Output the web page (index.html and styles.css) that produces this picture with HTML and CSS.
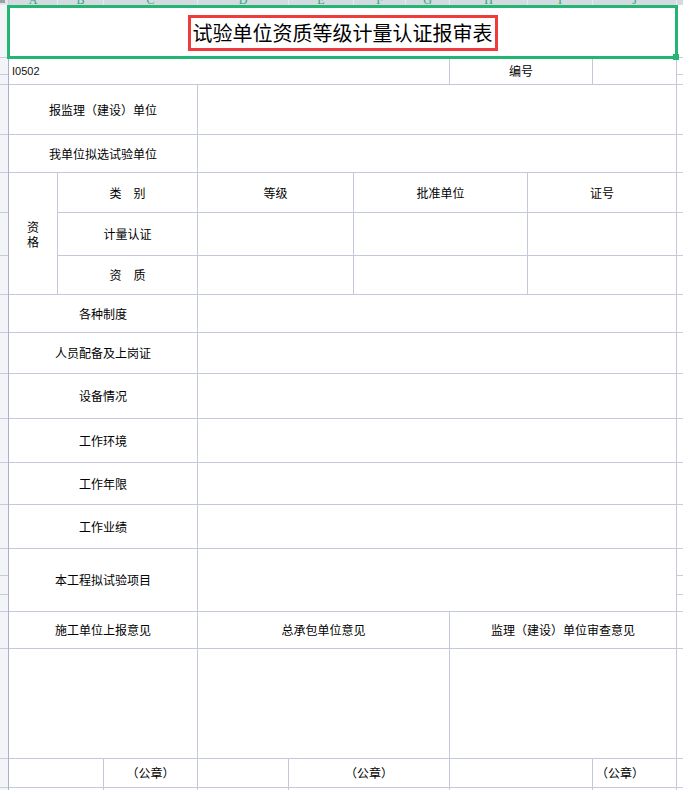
FILE: index.html
```html
<!DOCTYPE html>
<html lang="zh-CN">
<head>
<meta charset="utf-8">
<title>试验单位资质等级计量认证报审表</title>
<link rel="stylesheet" href="styles.css">
</head>
<body>
<div class="sheet">
  <div class="colhead">
    <div class="corner"><span class="corner-mark"></span></div>
    <div class="ch"><span>A</span></div>
    <div class="ch"><span>B</span></div>
    <div class="ch"><span>C</span></div>
    <div class="ch"><span>D</span></div>
    <div class="ch"><span>E</span></div>
    <div class="ch"><span>F</span></div>
    <div class="ch"><span>G</span></div>
    <div class="ch"><span>H</span></div>
    <div class="ch"><span>I</span></div>
    <div class="ch"><span>J</span></div>
    <div class="ch ch-k"></div>
  </div>
  <div class="body">
    <div class="rowhead">
      <div class="seg h53"></div><div class="seg h17"></div><div class="seg h10"></div>
      <div class="seg h50"></div><div class="seg h38"></div><div class="seg h40"></div>
      <div class="seg h43"></div><div class="seg h39"></div><div class="seg h38"></div>
      <div class="seg h41"></div><div class="seg h45"></div><div class="seg h44"></div>
      <div class="seg h42"></div><div class="seg h44"></div><div class="seg h27"></div>
      <div class="seg h19"></div><div class="seg h17"></div><div class="seg h37"></div>
      <div class="seg h110"></div><div class="seg h29"></div><div class="seg h20"></div>
    </div>
    <div class="grid">
      <div class="cell a-j title-cell"><div class="title-box">试验单位资质等级计量认证报审表</div></div>

      <div class="cell a-g code">I0502</div>
      <div class="cell h-i">编号</div>
      <div class="cell j"></div>

      <div class="cell a-c">报监理（建设）单位</div>
      <div class="cell d-j"></div>

      <div class="cell a-c">我单位拟选试验单位</div>
      <div class="cell d-j"></div>

      <div class="cell a rs3 vtext">资<br>格</div>
      <div class="cell b-c">类　别</div>
      <div class="cell d-e">等级</div>
      <div class="cell f-h">批准单位</div>
      <div class="cell i-j">证号</div>

      <div class="cell b-c">计量认证</div>
      <div class="cell d-e"></div>
      <div class="cell f-h"></div>
      <div class="cell i-j"></div>

      <div class="cell b-c">资　质</div>
      <div class="cell d-e"></div>
      <div class="cell f-h"></div>
      <div class="cell i-j"></div>

      <div class="cell a-c">各种制度</div>
      <div class="cell d-j"></div>

      <div class="cell a-c">人员配备及上岗证</div>
      <div class="cell d-j"></div>

      <div class="cell a-c">设备情况</div>
      <div class="cell d-j"></div>

      <div class="cell a-c">工作环境</div>
      <div class="cell d-j"></div>

      <div class="cell a-c">工作年限</div>
      <div class="cell d-j"></div>

      <div class="cell a-c">工作业绩</div>
      <div class="cell d-j"></div>

      <div class="cell a-c">本工程拟试验项目</div>
      <div class="cell d-j"></div>

      <div class="cell a-c">施工单位上报意见</div>
      <div class="cell d-g">总承包单位意见</div>
      <div class="cell h-j">监理（建设）单位审查意见</div>

      <div class="cell a-c"></div>
      <div class="cell d-g"></div>
      <div class="cell h-j"></div>

      <div class="cell a-b"></div>
      <div class="cell c">（公章）</div>
      <div class="cell d"></div>
      <div class="cell e-g">（公章）</div>
      <div class="cell h-i"></div>
      <div class="cell j left">（公章）</div>

      <div class="cell a-b"></div>
      <div class="cell c"></div>
      <div class="cell d"></div>
      <div class="cell e-g"></div>
      <div class="cell h-i"></div>
      <div class="cell j"></div>
    </div>
    <div class="colk">
      <div class="seg h53"></div><div class="seg h17"></div><div class="seg h10"></div>
      <div class="seg h50"></div><div class="seg h38"></div><div class="seg h40"></div>
      <div class="seg h43"></div><div class="seg h39"></div><div class="seg h38"></div>
      <div class="seg h41"></div><div class="seg h45"></div><div class="seg h44"></div>
      <div class="seg h42"></div><div class="seg h44"></div><div class="seg h27"></div>
      <div class="seg h19"></div><div class="seg h17"></div><div class="seg h37"></div>
      <div class="seg h110"></div><div class="seg h29"></div><div class="seg h20"></div>
    </div>
  </div>
  <div class="selection"></div>
  <div class="fill-handle"></div>
</div>
</body>
</html>
```

FILE: styles.css
```css
* { box-sizing: border-box; }

html, body {
  margin: 0;
  padding: 0;
  background: #ffffff;
}

body {
  font-family: "Noto Sans CJK SC", "Noto Sans", sans-serif;
  color: #000;
}

.sheet {
  position: relative;
  width: 683px;
  height: 790px;
  overflow: hidden;
  background: #ffffff;
}

/* column header strip */
.colhead {
  display: grid;
  grid-template-columns: 9px 49px 46px 94px 91px 65px 52px 44px 78px 65px 84px 1fr;
  height: 5px;
  background: #d5d9e0;
  overflow: hidden;
}

.corner {
  background: #e2e4e9;
  border-right: 1px solid #c9cdd6;
}

.corner-mark {
  display: block;
  width: 5px;
  height: 3px;
  background: #9c9fa5;
}

.ch {
  border-right: 1px solid #e7e9ed;
  overflow: hidden;
  text-align: center;
}

.ch span {
  display: block;
  margin-top: -6px;
  font-family: "Liberation Serif", serif;
  font-size: 12px;
  line-height: 12px;
  color: #2fa772;
}

.ch-k {
  border-right: none;
}

/* body */
.body {
  display: flex;
  height: 785px;
}

.rowhead {
  flex: none;
  width: 9px;
  display: flex;
  flex-direction: column;
  background: #f3f4f7;
  border-right: 1px solid #a9b1c9;
}

.colk {
  flex: 1;
  display: flex;
  flex-direction: column;
  background: #ffffff;
}

.seg {
  flex: none;
  border-bottom: 1px solid #c8cddc;
}

.h10 { height: 10px; }
.h17 { height: 17px; }
.h19 { height: 19px; }
.h20 { height: 20px; }
.h27 { height: 27px; }
.h29 { height: 29px; }
.h37 { height: 37px; }
.h38 { height: 38px; }
.h39 { height: 39px; }
.h40 { height: 40px; }
.h41 { height: 41px; }
.h42 { height: 42px; }
.h43 { height: 43px; }
.h44 { height: 44px; }
.h45 { height: 45px; }
.h50 { height: 50px; }
.h53 { height: 53px; }
.h110 { height: 110px; }

.grid {
  flex: none;
  display: grid;
  grid-template-columns: 49px 46px 94px 91px 65px 52px 44px 78px 65px 84px;
  grid-template-rows: 53px 27px 50px 38px 40px 43px 39px 38px 41px 45px 44px 42px 44px 63px 37px 110px 29px 20px;
  width: 668px;
}

.cell {
  display: flex;
  align-items: center;
  justify-content: center;
  border-right: 1px solid #c3c9da;
  border-bottom: 1px solid #c3c9da;
  font-size: 12px;
  line-height: 14px;
  white-space: nowrap;
  overflow: hidden;
}

.a-j { grid-column: 1 / 11; }
.a-g { grid-column: 1 / 8; }
.a-c { grid-column: 1 / 4; }
.a-b { grid-column: 1 / 3; }
.a   { grid-column: 1 / 2; }
.b-c { grid-column: 2 / 4; }
.c   { grid-column: 3 / 4; }
.d-j { grid-column: 4 / 11; }
.d-g { grid-column: 4 / 8; }
.d-e { grid-column: 4 / 6; }
.d   { grid-column: 4 / 5; }
.e-g { grid-column: 5 / 8; }
.f-h { grid-column: 6 / 9; }
.h-j { grid-column: 8 / 11; }
.h-i { grid-column: 8 / 10; }
.i-j { grid-column: 9 / 11; }
.j   { grid-column: 10 / 11; }

.rs3 { grid-row: span 3; }

.vtext {
  line-height: 15px;
  text-align: center;
  white-space: normal;
  padding-top: 1px;
}

.title-cell {
  padding-top: 4px;
}

.title-box {
  height: 36px;
  padding: 0 2px;
  border: 3px solid #ef3b3b;
  font-size: 20px;
  line-height: 30px;
  color: #000;
}

.code {
  justify-content: flex-start;
  padding-left: 3px;
  font-family: "Liberation Sans", Arial, sans-serif;
  font-size: 11px;
  color: #111;
}

.left {
  justify-content: flex-start;
  padding-left: 3px;
}

/* selection overlay */
.selection {
  position: absolute;
  left: 7px;
  top: 5px;
  width: 671px;
  height: 54px;
  border: 3px solid #22b573;
  pointer-events: none;
}

.fill-handle {
  position: absolute;
  left: 673px;
  top: 54px;
  width: 6px;
  height: 6px;
  background: #22b573;
}
```
